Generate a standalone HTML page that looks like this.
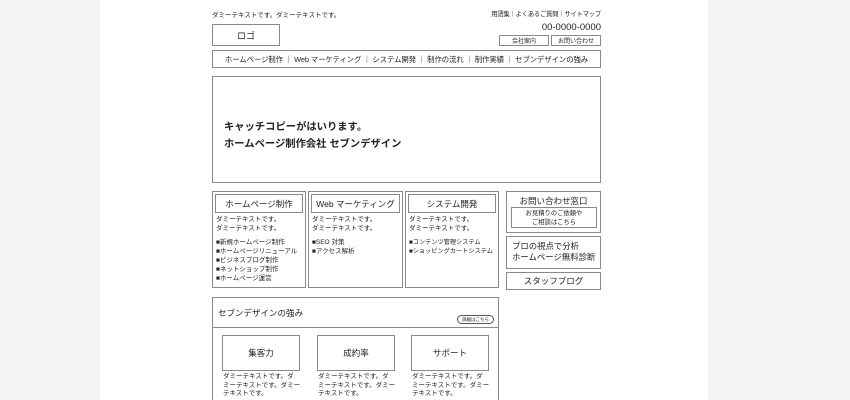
<!DOCTYPE html>
<html><head><meta charset="utf-8"><style>
*{margin:0;padding:0;box-sizing:border-box}
html,body{width:850px;height:400px;overflow:hidden}
body{background:#f3f3f3;font-family:"Liberation Sans","Noto Sans CJK JP",sans-serif;color:#222;position:relative}
.page{position:absolute;left:100px;top:0;width:608px;height:400px;background:#fff}
.a{position:absolute;white-space:nowrap}
.b{position:absolute;border:1.5px solid #8a8a8a;background:#fff}
.c{display:flex;align-items:center;justify-content:center;white-space:nowrap}
.t{font-size:6.5px;line-height:9px}
</style></head><body>
<div class="page"></div>
<div class="a" style="left:212px;top:9px;font-size:6.5px">ダミーテキストです。ダミーテキストです。</div>
<div class="a" style="left:470px;top:9px;width:131px;text-align:right;font-size:6.3px;letter-spacing:-0.2px">用語集｜よくあるご質問｜サイトマップ</div>
<div class="b c" style="left:212px;top:24px;width:68px;height:22px;font-size:9px">ロゴ</div>
<div class="a" style="left:500px;top:22px;width:101px;text-align:right;font-size:9.5px">00-0000-0000</div>
<div class="b c" style="left:499px;top:35px;width:50px;height:11px;font-size:6px">会社案内</div>
<div class="b c" style="left:551px;top:35px;width:50px;height:11px;font-size:6px">お問い合わせ</div>
<div class="b c" style="left:212px;top:50px;width:389px;height:18px;font-size:7.4px;letter-spacing:-0.1px">ホームページ制作 ｜ Web マーケティング ｜ システム開発 ｜ 制作の流れ ｜ 制作実績 ｜ セブンデザインの強み</div>
<div class="b" style="left:212px;top:76px;width:389px;height:107px"></div>
<div class="a" style="left:224px;top:119px;font-size:10.3px;font-weight:bold;line-height:17px">キャッチコピーがはいります。<br>ホームページ制作会社 セブンデザイン</div>

<div class="b" style="left:212px;top:191px;width:94px;height:97px"></div>
<div class="b c" style="left:215px;top:194px;width:88px;height:19px;font-size:8.5px">ホームページ制作</div>
<div class="a t" style="left:216px;top:215px">ダミーテキストです。<br>ダミーテキストです。</div>
<div class="a t" style="left:216px;top:238px">■新規ホームページ制作<br>■ホームページリニューアル<br>■ビジネスブログ制作<br>■ネットショップ制作<br>■ホームページ運営</div>

<div class="b" style="left:308px;top:191px;width:95px;height:97px"></div>
<div class="b c" style="left:311px;top:194px;width:89px;height:19px;font-size:8.5px">Web マーケティング</div>
<div class="a t" style="left:312px;top:215px">ダミーテキストです。<br>ダミーテキストです。</div>
<div class="a t" style="left:312px;top:238px">■SEO 対策<br>■アクセス解析</div>

<div class="b" style="left:405px;top:191px;width:94px;height:97px"></div>
<div class="b c" style="left:408px;top:194px;width:88px;height:19px;font-size:8.5px">システム開発</div>
<div class="a t" style="left:409px;top:215px">ダミーテキストです。<br>ダミーテキストです。</div>
<div class="a t" style="left:409px;top:238px;font-size:6.2px">■コンテンツ管理システム<br>■ショッピングカートシステム</div>

<div class="b" style="left:506px;top:191px;width:95px;height:42px"></div>
<div class="a" style="left:506px;top:195px;width:95px;text-align:center;font-size:8.5px">お問い合わせ窓口</div>
<div class="b c" style="left:511px;top:207px;width:86px;height:21px;font-size:6.3px;text-align:center;line-height:9px">お見積りのご依頼や<br>ご相談はこちら</div>
<div class="b" style="left:506px;top:236px;width:95px;height:33px"></div>
<div class="a" style="left:512px;top:241px;font-size:8.4px;line-height:11px">プロの視点で分析<br>ホームページ無料診断</div>
<div class="b c" style="left:506px;top:272px;width:95px;height:18px;font-size:8.5px">スタッフブログ</div>

<div class="b" style="left:212px;top:297px;width:287px;height:110px"></div>
<div class="a" style="left:218px;top:307px;font-size:8.5px">セブンデザインの強み</div>
<div class="a" style="left:212px;top:327px;width:287px;border-top:1.5px solid #8a8a8a"></div>
<div class="a c" style="left:457px;top:315px;width:37px;height:9px;border:1px solid #555;border-radius:5px;font-size:4.5px">詳細はこちら</div>
<div class="b c" style="left:222px;top:335px;width:78px;height:36px;font-size:8.5px">集客力</div>
<div class="b c" style="left:317px;top:335px;width:78px;height:36px;font-size:8.5px">成約率</div>
<div class="b c" style="left:411px;top:335px;width:78px;height:36px;font-size:8.5px">サポート</div>
<div class="a t" style="left:223px;top:373px;line-height:8.5px">ダミーテキストです。ダ<br>ミーテキストです。ダミー<br>テキストです。</div>
<div class="a t" style="left:318px;top:373px;line-height:8.5px">ダミーテキストです。ダ<br>ミーテキストです。ダミー<br>テキストです。</div>
<div class="a t" style="left:412px;top:373px;line-height:8.5px">ダミーテキストです。ダ<br>ミーテキストです。ダミー<br>テキストです。</div>
</body></html>
